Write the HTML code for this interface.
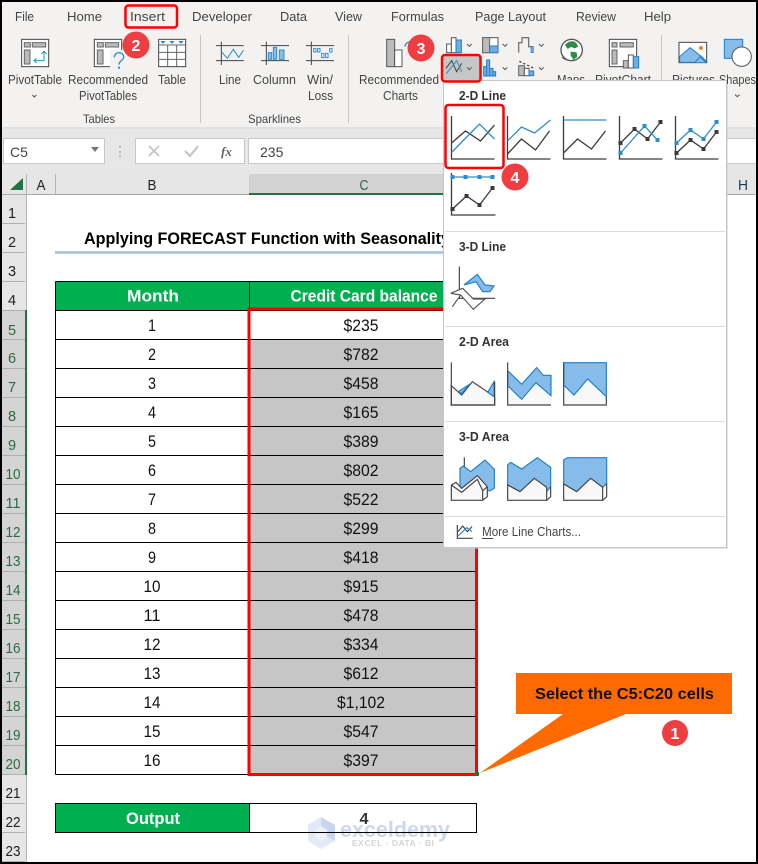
<!DOCTYPE html>
<html><head><meta charset="utf-8"><style>
html,body{margin:0;padding:0;background:#fff}
svg{display:block}
text{font-family:"Liberation Sans",sans-serif}
.t{font-size:12.5px;fill:#444}
.r{font-size:12.5px;fill:#444}
.g{font-size:12px;fill:#444}
.v{font-size:16.5px;fill:#111;text-anchor:middle}
.h{font-size:14.5px;fill:#222;text-anchor:middle}
.s{font-size:14.5px;fill:#2a6a48;text-anchor:middle}
.w{font-size:16.5px;font-weight:bold;fill:#fff;text-anchor:middle}
.m{font-size:12.5px;font-weight:bold;fill:#333}
.n{font-size:16px;font-weight:bold;fill:#fff;text-anchor:middle}
.ln{fill:none;stroke:#3a3a3a;stroke-width:1.3}
.bl{fill:none;stroke:#2a8dd0;stroke-width:1.3}
.ch{fill:none;stroke:#555;stroke-width:3}
</style></head><body>
<svg width="758" height="864" viewBox="0 0 758 864" xmlns="http://www.w3.org/2000/svg">
<rect width="758" height="864" fill="#fff"/>
<!-- ribbon -->
<rect x="0" y="0" width="758" height="127" fill="#f3f2f1"/>
<rect x="0" y="127" width="758" height="47" fill="#e7e7e7"/>
<rect x="0" y="127" width="758" height="2" fill="#e0e0e0"/>
<text class="t" x="15" y="21" textLength="19" lengthAdjust="spacingAndGlyphs">File</text>
<text class="t" x="67" y="21" textLength="35" lengthAdjust="spacingAndGlyphs">Home</text>
<text class="t" x="130" y="21" textLength="35" lengthAdjust="spacingAndGlyphs">Insert</text>
<text class="t" x="192" y="21" textLength="60" lengthAdjust="spacingAndGlyphs">Developer</text>
<text class="t" x="280" y="21" textLength="27" lengthAdjust="spacingAndGlyphs">Data</text>
<text class="t" x="335" y="21" textLength="27" lengthAdjust="spacingAndGlyphs">View</text>
<text class="t" x="391" y="21" textLength="53" lengthAdjust="spacingAndGlyphs">Formulas</text>
<text class="t" x="475" y="21" textLength="71" lengthAdjust="spacingAndGlyphs">Page Layout</text>
<text class="t" x="576" y="21" textLength="40" lengthAdjust="spacingAndGlyphs">Review</text>
<text class="t" x="644" y="21" textLength="27" lengthAdjust="spacingAndGlyphs">Help</text>
<text class="r" x="8" y="84" textLength="54" lengthAdjust="spacingAndGlyphs">PivotTable</text>
<text class="r" x="68" y="84" textLength="80" lengthAdjust="spacingAndGlyphs">Recommended</text>
<text class="r" x="79" y="100" textLength="58" lengthAdjust="spacingAndGlyphs">PivotTables</text>
<text class="r" x="158" y="84" textLength="28" lengthAdjust="spacingAndGlyphs">Table</text>
<text class="r" x="219" y="84" textLength="22" lengthAdjust="spacingAndGlyphs">Line</text>
<text class="r" x="253" y="84" textLength="43" lengthAdjust="spacingAndGlyphs">Column</text>
<text class="r" x="307" y="84" textLength="26" lengthAdjust="spacingAndGlyphs">Win/</text>
<text class="r" x="308" y="100" textLength="25" lengthAdjust="spacingAndGlyphs">Loss</text>
<text class="r" x="359" y="84" textLength="80" lengthAdjust="spacingAndGlyphs">Recommended</text>
<text class="r" x="383" y="100" textLength="35" lengthAdjust="spacingAndGlyphs">Charts</text>
<text class="r" x="557" y="84" textLength="28" lengthAdjust="spacingAndGlyphs">Maps</text>
<text class="r" x="595" y="84" textLength="56" lengthAdjust="spacingAndGlyphs">PivotChart</text>
<text class="r" x="672" y="84" textLength="43" lengthAdjust="spacingAndGlyphs">Pictures</text>
<text class="r" x="719" y="84" textLength="37" lengthAdjust="spacingAndGlyphs">Shapes</text>
<text class="g" x="83" y="123" textLength="32" lengthAdjust="spacingAndGlyphs">Tables</text>
<text class="g" x="248" y="123" textLength="53" lengthAdjust="spacingAndGlyphs">Sparklines</text>
<path d="M200.5 35V123M348.5 35V123M661.5 35V123" stroke="#c8c6c4" stroke-width="1"/>
<!-- ribbon icons group 1 -->
<g transform="scale(.33333)">
<path class="ch" d="M97 285l6 6 6-6"/>
<rect x="65" y="118" width="81" height="82" fill="#fff" stroke="#444" stroke-width="3"/>
<rect x="73" y="128" width="18" height="13" fill="#bbb" stroke="#666" stroke-width="3"/>
<rect x="97" y="128" width="40" height="13" fill="#bbb" stroke="#666" stroke-width="3"/>
<rect x="73" y="150" width="17" height="42" fill="#bbb" stroke="#666" stroke-width="3"/>
<path d="M103 182H132V155M124 162l8-8 8 8M110 175l-8 7 8 7" fill="none" stroke="#2a8dd0" stroke-width="3"/>
<rect x="283" y="118" width="82" height="82" fill="#fff" stroke="#444" stroke-width="3"/>
<rect x="292" y="128" width="18" height="13" fill="#bbb" stroke="#666" stroke-width="3"/>
<rect x="316" y="128" width="40" height="13" fill="#bbb" stroke="#666" stroke-width="3"/>
<rect x="292" y="150" width="17" height="42" fill="#bbb" stroke="#666" stroke-width="3"/>
<rect x="330" y="150" width="50" height="58" fill="#f3f2f1"/>
<path d="M343 172c0-9 7-14 14-14s14 5 14 13c0 11-14 10-14 23" fill="none" stroke="#2a8dd0" stroke-width="4"/>
<rect x="354" y="200" width="6" height="6" fill="#2a8dd0"/>
<rect x="476" y="118" width="81" height="82" fill="#fff" stroke="#444" stroke-width="3"/>
<path d="M476 135H557M476 157H557M476 178H557M503 135V200M530 135V200" stroke="#666" stroke-width="3" fill="none"/>
<path d="M481 123h16l-8 9zM508 123h16l-8 9zM535 123h16l-8 9z" fill="#2a8dd0"/>
<path d="M648 137H731M648 182H731M664 125V195" stroke="#444" stroke-width="3" fill="none"/>
<path d="M664 155L682 175L700 148L716 172L731 150" fill="none" stroke="#2a8dd0" stroke-width="3"/>
<path d="M783 137H867M783 182H867M799 125V195" stroke="#444" stroke-width="3" fill="none"/>
<rect x="805" y="158" width="10" height="20" fill="#8bbde8" stroke="#2a8dd0" stroke-width="3"/>
<rect x="820" y="142" width="10" height="36" fill="#8bbde8" stroke="#2a8dd0" stroke-width="3"/>
<rect x="838" y="150" width="14" height="28" fill="#8bbde8" stroke="#2a8dd0" stroke-width="3"/>
<path d="M918 137H1002M918 182H1002M934 125V195" stroke="#444" stroke-width="3" fill="none"/>
<path d="M941 146h7v10h-7zM953 146h7v10h-7zM965 160h7v13h-7zM977 160h7v13h-7zM989 146h7v10h-7z" fill="#fff" stroke="#2a8dd0" stroke-width="3"/>
</g>
<!-- formula bar -->
<rect x="3.5" y="138.5" width="101" height="25" fill="#fff" stroke="#c8c8c8"/>
<text x="10" y="157" font-size="14" fill="#444">C5</text>
<path d="M91 147h8l-4 5z" fill="#777"/>
<path d="M120 146v2M120 151v2M120 155v2" stroke="#aaa" stroke-width="1.5"/>
<rect x="135.5" y="138.5" width="109" height="25" fill="#fff" stroke="#c8c8c8"/>
<path d="M149 146l10 10M159 146l-10 10" stroke="#c4c4c4" stroke-width="1.8" fill="none"/>
<path d="M185 151l5 5 8-10" stroke="#c4c4c4" stroke-width="2.2" fill="none"/>
<text x="221" y="156" font-style="italic" font-weight="bold" font-size="13" fill="#666" style="font-family:'Liberation Serif',serif">fx</text>
<rect x="248.5" y="138.5" width="520" height="25" fill="#fff" stroke="#c8c8c8"/>
<text x="260" y="157" font-size="14" fill="#444">235</text>
<!-- col headers -->
<rect x="0" y="174" width="758" height="21" fill="#e6e6e6"/>
<rect x="249" y="174" width="228" height="20" fill="#d2d2d2"/>
<rect x="0" y="194" width="758" height="1" fill="#aaa"/>
<rect x="249" y="193" width="228" height="2" fill="#217346"/>
<path d="M10 190L23 178V190Z" fill="#217346"/>
<path d="M26.5 174V195M55.5 174V194" stroke="#b5b5b5"/>
<text class="h" x="41" y="190" textLength="9" lengthAdjust="spacingAndGlyphs">A</text>
<text class="h" x="152" y="190" textLength="9" lengthAdjust="spacingAndGlyphs">B</text>
<text class="s" x="364" y="190" textLength="9" lengthAdjust="spacingAndGlyphs">C</text>
<text class="h" x="743" y="190" textLength="10" lengthAdjust="spacingAndGlyphs" style="fill:#123c5c">H</text>
<!-- row headers -->
<rect x="0" y="195" width="27" height="667" fill="#e6e6e6"/>
<rect x="2" y="310" width="23" height="465" fill="#d4d4d4"/>
<path d="M26.5 195V862" stroke="#b5b5b5"/>
<rect x="25" y="310" width="2" height="465" fill="#217346"/>
<path stroke="#b0b0b0" d="M2 223.5H25M2 252.5H25M2 281.5H25M2 310.5H25M2 339.5H25M2 368.5H25M2 397.5H25M2 426.5H25M2 455.5H25M2 484.5H25M2 513.5H25M2 542.5H25M2 571.5H25M2 600.5H25M2 629.5H25M2 658.5H25M2 687.5H25M2 716.5H25M2 745.5H25M2 774.5H25M2 803.5H25M2 832.5H25M2 861.5H25"/>
<text class="h" x="12" y="218">1</text><text class="h" x="12" y="247">2</text><text class="h" x="12" y="276">3</text><text class="h" x="12" y="305">4</text>
<text class="s" x="12" y="335">5</text><text class="s" x="12" y="363">6</text><text class="s" x="12" y="392">7</text><text class="s" x="12" y="421">8</text><text class="s" x="12" y="450">9</text><text class="s" x="13" y="479" textLength="15" lengthAdjust="spacingAndGlyphs">10</text><text class="s" x="13" y="508" textLength="15" lengthAdjust="spacingAndGlyphs">11</text><text class="s" x="13" y="537" textLength="15" lengthAdjust="spacingAndGlyphs">12</text><text class="s" x="13" y="566" textLength="15" lengthAdjust="spacingAndGlyphs">13</text><text class="s" x="13" y="595" textLength="15" lengthAdjust="spacingAndGlyphs">14</text><text class="s" x="13" y="624" textLength="15" lengthAdjust="spacingAndGlyphs">15</text><text class="s" x="13" y="653" textLength="15" lengthAdjust="spacingAndGlyphs">16</text><text class="s" x="13" y="682" textLength="15" lengthAdjust="spacingAndGlyphs">17</text><text class="s" x="13" y="711" textLength="15" lengthAdjust="spacingAndGlyphs">18</text><text class="s" x="13" y="740" textLength="15" lengthAdjust="spacingAndGlyphs">19</text><text class="s" x="13" y="769" textLength="15" lengthAdjust="spacingAndGlyphs">20</text>
<text class="h" x="13" y="798" textLength="15" lengthAdjust="spacingAndGlyphs">21</text><text class="h" x="13" y="827" textLength="15" lengthAdjust="spacingAndGlyphs">22</text><text class="h" x="13" y="856" textLength="15" lengthAdjust="spacingAndGlyphs">23</text>
<!-- title -->
<text x="84" y="244" font-size="16.5" font-weight="bold" fill="#000" textLength="366" lengthAdjust="spacingAndGlyphs">Applying FORECAST Function with Seasonality</text>
<rect x="55" y="251" width="390" height="3" fill="#aec8e6"/>
<!-- table -->
<rect x="55.5" y="281.5" width="421" height="29" fill="#00b050"/>
<rect x="250" y="339" width="226" height="436" fill="#c6c6c6"/>
<path stroke="#000" fill="none" d="M55.5 281.5H476.5M55.5 310.5H476.5M55.5 339.5H476.5M55.5 368.5H476.5M55.5 397.5H476.5M55.5 426.5H476.5M55.5 455.5H476.5M55.5 484.5H476.5M55.5 513.5H476.5M55.5 542.5H476.5M55.5 571.5H476.5M55.5 600.5H476.5M55.5 629.5H476.5M55.5 658.5H476.5M55.5 687.5H476.5M55.5 716.5H476.5M55.5 745.5H476.5M55.5 774.5H476.5M55.5 281.5V774.5M249.5 281.5V774.5M476.5 281.5V774.5"/>
<text class="w" x="153" y="301.5" textLength="52" lengthAdjust="spacingAndGlyphs">Month</text>
<text class="w" x="364" y="301.5" textLength="147" lengthAdjust="spacingAndGlyphs">Credit Card balance</text>
<text class="v" x="152" y="331" textLength="8" lengthAdjust="spacingAndGlyphs">1</text><text class="v" x="152" y="360" textLength="8" lengthAdjust="spacingAndGlyphs">2</text><text class="v" x="152" y="389" textLength="8" lengthAdjust="spacingAndGlyphs">3</text><text class="v" x="152" y="418" textLength="8" lengthAdjust="spacingAndGlyphs">4</text><text class="v" x="152" y="447" textLength="8" lengthAdjust="spacingAndGlyphs">5</text><text class="v" x="152" y="476" textLength="8" lengthAdjust="spacingAndGlyphs">6</text><text class="v" x="152" y="505" textLength="8" lengthAdjust="spacingAndGlyphs">7</text><text class="v" x="152" y="534" textLength="8" lengthAdjust="spacingAndGlyphs">8</text><text class="v" x="152" y="563" textLength="8" lengthAdjust="spacingAndGlyphs">9</text><text class="v" x="152" y="592" textLength="17" lengthAdjust="spacingAndGlyphs">10</text><text class="v" x="152" y="621" textLength="17" lengthAdjust="spacingAndGlyphs">11</text><text class="v" x="152" y="650" textLength="17" lengthAdjust="spacingAndGlyphs">12</text><text class="v" x="152" y="679" textLength="17" lengthAdjust="spacingAndGlyphs">13</text><text class="v" x="152" y="708" textLength="17" lengthAdjust="spacingAndGlyphs">14</text><text class="v" x="152" y="737" textLength="17" lengthAdjust="spacingAndGlyphs">15</text><text class="v" x="152" y="766" textLength="17" lengthAdjust="spacingAndGlyphs">16</text>
<text class="v" x="361" y="331" textLength="35" lengthAdjust="spacingAndGlyphs">$235</text><text class="v" x="361" y="360" textLength="35" lengthAdjust="spacingAndGlyphs">$782</text><text class="v" x="361" y="389" textLength="35" lengthAdjust="spacingAndGlyphs">$458</text><text class="v" x="361" y="418" textLength="35" lengthAdjust="spacingAndGlyphs">$165</text><text class="v" x="361" y="447" textLength="35" lengthAdjust="spacingAndGlyphs">$389</text><text class="v" x="361" y="476" textLength="35" lengthAdjust="spacingAndGlyphs">$802</text><text class="v" x="361" y="505" textLength="35" lengthAdjust="spacingAndGlyphs">$522</text><text class="v" x="361" y="534" textLength="35" lengthAdjust="spacingAndGlyphs">$299</text><text class="v" x="361" y="563" textLength="35" lengthAdjust="spacingAndGlyphs">$418</text><text class="v" x="361" y="592" textLength="35" lengthAdjust="spacingAndGlyphs">$915</text><text class="v" x="361" y="621" textLength="35" lengthAdjust="spacingAndGlyphs">$478</text><text class="v" x="361" y="650" textLength="35" lengthAdjust="spacingAndGlyphs">$334</text><text class="v" x="361" y="679" textLength="35" lengthAdjust="spacingAndGlyphs">$612</text><text class="v" x="361" y="708" textLength="48" lengthAdjust="spacingAndGlyphs">$1,102</text><text class="v" x="361" y="737" textLength="35" lengthAdjust="spacingAndGlyphs">$547</text><text class="v" x="361" y="766" textLength="35" lengthAdjust="spacingAndGlyphs">$397</text>
<rect x="249" y="309" width="227.5" height="465.5" fill="none" stroke="#f00" stroke-width="3"/>
<rect x="475" y="772" width="4" height="4" fill="#217346"/>
<!-- output -->
<rect x="55.5" y="803.5" width="194" height="29" fill="#00b050"/>
<rect x="55.5" y="803.5" width="421" height="29" fill="none" stroke="#000"/>
<path d="M249.5 803.5V832.5" stroke="#000"/>
<text class="w" x="153" y="824" textLength="54" lengthAdjust="spacingAndGlyphs">Output</text>
<!-- watermark -->
<g>
<path d="M321 817L335 825V841L321 849L308 841V825Z" fill="#e3eaf5"/>
<path d="M321 817L335 825V841L321 833Z" fill="#c9d7ee"/>
<path d="M321 826L327 830V837L321 841L315 837V830Z" fill="#eef2f8"/>
<text x="340" y="837" font-size="22" font-weight="bold" fill="#cbd8f0" textLength="110" lengthAdjust="spacingAndGlyphs">exceldemy</text>
<text x="352" y="846" font-size="8.5" font-weight="bold" fill="#d4d4d4" textLength="82" lengthAdjust="spacing">EXCEL · DATA · BI</text>
</g>
<path d="M55.5 832.5H476.5" stroke="#000"/>
<text x="364" y="824" font-size="15.5" font-weight="bold" fill="#333" text-anchor="middle" textLength="9" lengthAdjust="spacingAndGlyphs">4</text>
<!-- callout -->
<path d="M516 673H732V714H626L480 773L563 714H516Z" fill="#ff6a00"/>
<text x="624.5" y="699" font-size="15.5" font-weight="bold" fill="#111" text-anchor="middle" textLength="179" lengthAdjust="spacingAndGlyphs">Select the C5:C20 cells</text>
<circle cx="675" cy="733" r="13" fill="#ef3e42"/>
<text class="n" x="675" y="739">1</text>
<!-- ribbon icons group 2 -->
<g transform="translate(380 0) scale(.33333)">
<rect x="20" y="118" width="24" height="82" fill="#bbb" stroke="#555" stroke-width="3"/>
<rect x="44" y="150" width="22" height="50" fill="#fff" stroke="#555" stroke-width="3"/>
<path d="M75 140c0-9 7-14 14-14s14 5 14 13" fill="none" stroke="#2a8dd0" stroke-width="4"/>
<rect x="200" y="132" width="14" height="26" fill="#fff" stroke="#555" stroke-width="3"/>
<rect x="214" y="113" width="14" height="45" fill="#fff" stroke="#555" stroke-width="3"/>
<rect x="228" y="120" width="16" height="38" fill="#6eaee6" stroke="#1f7fc8" stroke-width="3"/>
<path class="ch" d="M261 132l7 7 7-7"/>
<rect x="308" y="113" width="46" height="45" fill="#fff" stroke="#555" stroke-width="3"/>
<rect x="308" y="113" width="21" height="45" fill="#bbb" stroke="#666" stroke-width="3"/>
<rect x="329" y="138" width="25" height="20" fill="#6eaee6" stroke="#1f7fc8" stroke-width="3"/>
<path class="ch" d="M368 132l7 7 7-7"/>
<path d="M416 158V128H426V113H446V140H456V158" fill="none" stroke="#777" stroke-width="4"/>
<rect x="453" y="140" width="7" height="18" fill="#6eaee6" stroke="#1f7fc8" stroke-width="2"/>
<path class="ch" d="M477 132l7 7 7-7"/>
<rect x="185" y="165" width="115" height="78" rx="6" fill="#c6c6c6"/>
<path d="M198 205L215 182L230 215L245 190" fill="none" stroke="#444" stroke-width="3"/>
<path d="M198 222L230 182L245 215" fill="none" stroke="#2a8dd0" stroke-width="3"/>
<path class="ch" d="M261 202l7 7 7-7"/>
<path d="M311 228V200H320V180H329V205H339V228Z M320 228V200M329 228V205 M339 228h8V215h-8" fill="#6eaee6" stroke="#1f7fc8" stroke-width="3"/>
<path class="ch" d="M368 202l7 7 7-7"/>
<rect x="416" y="197" width="17" height="30" fill="#bbb" stroke="#666" stroke-width="3"/>
<rect x="433" y="205" width="14" height="22" fill="#fff" stroke="#555" stroke-width="3"/>
<rect x="447" y="213" width="14" height="14" fill="#6eaee6" stroke="#1f7fc8" stroke-width="3"/>
<path d="M418 184L462 205" stroke="#444" stroke-width="4" stroke-dasharray="7 6" fill="none"/>
<path class="ch" d="M477 202l7 7 7-7"/>
<circle cx="575" cy="150" r="32" fill="#fff" stroke="#555" stroke-width="4"/>
<path d="M555 135c10-12 22-14 32-8l8 12-10 6-12-4-10 6zM572 155l18 2 2 14-12 8-8-12z" fill="#2e8b4a"/>
<path d="M546 172c12 12 40 14 54-2" fill="none" stroke="#555" stroke-width="3"/>
<rect x="688" y="118" width="82" height="82" fill="#fff" stroke="#444" stroke-width="3"/>
<rect x="696" y="128" width="15" height="13" fill="#bbb" stroke="#666" stroke-width="3"/>
<rect x="720" y="128" width="40" height="13" fill="#bbb" stroke="#666" stroke-width="3"/>
<rect x="696" y="150" width="15" height="42" fill="#bbb" stroke="#666" stroke-width="3"/>
<rect x="730" y="182" width="15" height="22" fill="#bbb" stroke="#666" stroke-width="3"/>
<rect x="745" y="165" width="15" height="39" fill="#fff" stroke="#555" stroke-width="3"/>
<rect x="760" y="170" width="16" height="34" fill="#6eaee6" stroke="#1f7fc8" stroke-width="3"/>
<rect x="897" y="127" width="83" height="61" fill="#fff" stroke="#444" stroke-width="3"/>
<path d="M899 170L930 143L965 170L980 185V187H899Z" fill="#86bcea" stroke="#1f7fc8" stroke-width="3"/>
<path d="M945 187L960 170L978 187" fill="#86bcea" stroke="#1f7fc8" stroke-width="3"/>
<circle cx="963" cy="144" r="6" fill="#e8822b"/>
<rect x="1033" y="118" width="55" height="57" fill="#86bcea" stroke="#1f7fc8" stroke-width="3"/>
<circle cx="1085" cy="170" r="29" fill="#fff" stroke="#555" stroke-width="3"/>
<path class="ch" d="M1065 284l7 6 7-6"/>
</g>
<!-- menu -->
<rect x="446" y="84" width="282" height="465" fill="#c8c8c8" opacity=".5"/>
<rect x="443.5" y="80.5" width="283" height="467" fill="#fff" stroke="#c6c6c6"/>
<path d="M445 231.5H725M445 326.5H725M445 421.5H725M445 516.5H725" stroke="#dcdcdc"/>
<text class="m" x="459" y="100" textLength="47" lengthAdjust="spacingAndGlyphs">2-D Line</text>
<text class="m" x="459" y="251" textLength="47" lengthAdjust="spacingAndGlyphs">3-D Line</text>
<text class="m" x="459" y="346" textLength="50" lengthAdjust="spacingAndGlyphs">2-D Area</text>
<text class="m" x="459" y="441" textLength="50" lengthAdjust="spacingAndGlyphs">3-D Area</text>
<!-- 2-D Line icons -->
<g transform="translate(451.5 116)"><path class="ln" d="M0 0V43H43"/><path class="ln" d="M0 27L14 15L29 25L43 9"/><path class="bl" d="M0 36.5L28 8L43 23"/></g>
<g transform="translate(507.5 116)"><path class="ln" d="M0 0V43H43"/><path class="ln" d="M0 38L14 23L28 34L42 15"/><path class="bl" d="M0 25L14 11L27 17L43 4"/></g>
<g transform="translate(563.5 116)"><path class="ln" d="M0 0V43H43"/><path class="ln" d="M0 37L14 23L28 33L42 15"/><path class="bl" d="M0 4H43"/></g>
<g transform="translate(619.5 116)"><path class="ln" d="M0 0V43H43"/><path class="ln" d="M1 27L15 13L28 23L41 6"/><path class="bl" d="M1 37L25 10L38 24"/>
<path fill="#3a3a3a" d="M-1 25h4v4h-4zM13 11h4v4h-4zM26 21h4v4h-4zM39 4h4v4h-4z"/><path fill="#2a8dd0" d="M-1 35h4v4h-4zM23 8h4v4h-4zM36 22h4v4h-4z"/></g>
<g transform="translate(675.5 116)"><path class="ln" d="M0 0V43H43"/><path class="ln" d="M1 37L15 24L28 33L41 16"/><path class="bl" d="M1 27L15 14L28 23L41 6"/>
<path fill="#3a3a3a" d="M-1 35h4v4h-4zM13 22h4v4h-4zM26 31h4v4h-4zM39 14h4v4h-4z"/><path fill="#2a8dd0" d="M-1 25h4v4h-4zM13 12h4v4h-4zM26 21h4v4h-4zM39 4h4v4h-4z"/></g>
<g transform="translate(451.5 172)"><path class="ln" d="M0 1V43H44"/><path class="ln" d="M1 37L15 24L28 33L41 16"/><path class="bl" d="M1 5H41"/>
<path fill="#3a3a3a" d="M-1 35h4v4h-4zM13 22h4v4h-4zM26 31h4v4h-4zM39 14h4v4h-4z"/><path fill="#2a8dd0" d="M-1 3h4v4h-4zM12 3h4v4h-4zM26 3h4v4h-4zM39 3h4v4h-4z"/></g>
<!-- 3-D and area icons -->
<g transform="translate(440 230) scale(.33333)" stroke-width="3.5">
<path d="M58 110V205H165" fill="none" stroke="#444"/>
<path d="M72 165L112 133L135 165L162 168L150 185H128L108 155Z" fill="#86bcea" stroke="#1f7fc8"/>
<path d="M32 190L68 175L100 207H135L100 238L62 195L37 230M32 190L62 195" fill="#fff" stroke="#555"/>
<!-- 2-D area -->
<path d="M34 467L65 495L97 455L164 500V525H34Z" fill="#f8f8f8" stroke="#444"/>
<path d="M55 485L90 462L65 490Z M143 487L162 455V500Z" fill="#86bcea" stroke="#1f7fc8"/>
<path d="M34 397V525H164V455" fill="none" stroke="#444"/>
<path d="M203 467L245 508L288 458L333 497V525H203Z" fill="#f8f8f8"/>
<path d="M203 422L245 463L290 413L310 436H333V497L288 458L245 508L203 467Z" fill="#86bcea" stroke="#1f7fc8"/>
<path d="M203 397V525H333" fill="none" stroke="#444"/>
<path d="M371 465L402 495L443 447L499 500V525H371Z" fill="#f8f8f8"/>
<path d="M371 398H499V500L443 447L402 495L371 465Z" fill="#86bcea" stroke="#1f7fc8"/>
<path d="M371 398V525H499V500" fill="none" stroke="#444"/>
<!-- 3-D area -->
<path d="M73 682V715" stroke="#444" fill="none"/>
<path d="M60 715L70 708L92 725L135 690L163 718V775L150 782H60Z" fill="#86bcea" stroke="#1f7fc8"/>
<path d="M34 765L48 757L65 775L112 737L142 770V800L128 811H34Z" fill="#f8f8f8" stroke="#444"/>
<path d="M34 765L65 787L112 748L128 782V811M128 782L142 770" fill="none" stroke="#444"/>
<path d="M203 705L212 697L245 717L292 683L332 712V770L320 785L283 745L240 785L203 765Z" fill="#86bcea" stroke="#1f7fc8"/>
<path d="M203 765L240 785L283 745L320 772V811H203Z" fill="#f8f8f8" stroke="#444"/>
<path d="M320 811L332 800V770" fill="none" stroke="#444"/>
<path d="M371 690L382 683H500V760L488 772L452 745L410 785L371 762Z" fill="#86bcea" stroke="#1f7fc8"/>
<path d="M371 762L410 785L452 745L488 772V811H371Z" fill="#f8f8f8" stroke="#444"/>
<path d="M488 811L500 800V760" fill="none" stroke="#444"/>
<!-- more line -->
<path d="M52 885V925H98" fill="none" stroke="#444"/>
<path d="M54 905L68 888L82 905L96 890" fill="none" stroke="#444"/>
<path d="M54 918L80 893L96 905" fill="none" stroke="#2a8dd0"/>
</g>
<text x="482" y="536" font-size="12.5" fill="#444" textLength="99" lengthAdjust="spacingAndGlyphs">More Line Charts...</text>
<path d="M482 538.5H493" stroke="#444"/>
<!-- red annotations -->
<rect x="125.5" y="5.5" width="51.5" height="22" rx="3" fill="none" stroke="#f00" stroke-width="2.5"/>
<rect x="442" y="55" width="38.5" height="26.5" rx="3" fill="none" stroke="#f00" stroke-width="2.5"/>
<rect x="445.5" y="105" width="58" height="63" rx="3" fill="none" stroke="#f00" stroke-width="2.5"/>
<circle cx="136" cy="45" r="13.5" fill="#ef3e42"/><text class="n" x="136" y="51">2</text>
<circle cx="421" cy="48" r="13.5" fill="#ef3e42"/><text class="n" x="421" y="54">3</text>
<circle cx="515" cy="177" r="13.5" fill="#ef3e42"/><text class="n" x="515" y="183">4</text>
<!-- black frame -->
<rect x="0" y="0" width="758" height="2" fill="#000"/>
<rect x="0" y="0" width="2" height="864" fill="#000"/>
<rect x="756" y="0" width="2" height="864" fill="#000"/>
<rect x="0" y="862" width="758" height="2" fill="#000"/>
</svg>
</body></html>
